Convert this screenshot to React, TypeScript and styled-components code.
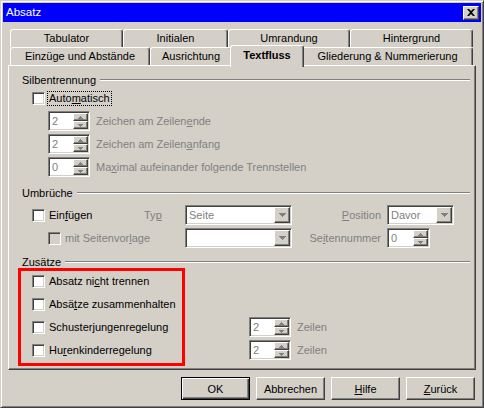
import React from 'react';
import styled, { createGlobalStyle, css } from 'styled-components';

const FACE = '#d4d0c8';
const SHADOW = '#808080';
const DARK = '#404040';
const LIGHT = '#ffffff';
const GRAY_TEXT = '#808080';

const GlobalStyle = createGlobalStyle`
	html, body {
		margin: 0;
		padding: 0;
		background: ${FACE};
	}
	body {
		font-family: "Liberation Sans", Arial, sans-serif;
		font-size: 11px;
		color: #000;
	}
	* {
		box-sizing: border-box;
	}
`;

const raised = css`
	background: ${FACE};
	border: 1px solid;
	border-color: ${LIGHT} ${DARK} ${DARK} ${LIGHT};
	box-shadow: inset -1px -1px ${SHADOW};
`;

const sunken = css`
	border: 1px solid;
	border-color: ${SHADOW} ${LIGHT} ${LIGHT} ${SHADOW};
	box-shadow: inset 1px 1px ${DARK}, inset -1px -1px ${FACE};
`;

const UpArrow = ({ color = GRAY_TEXT }: { color?: string }) => (
	<svg width='5' height='3' viewBox='0 0 5 3'>
		<path d='M2 0H3V1H4V2H5V3H0V2H1V1H2Z' fill={color} />
	</svg>
);

const DownArrow = ({ color = GRAY_TEXT, big = false }: { color?: string; big?: boolean }) =>
	big ? (
		<svg width='7' height='4' viewBox='0 0 7 4'>
			<path d='M0 0H7V1H6V2H5V3H4V4H3V3H2V2H1V1H0Z' fill={color} />
		</svg>
	) : (
		<svg width='5' height='3' viewBox='0 0 5 3'>
			<path d='M0 0H5V1H4V2H3V3H2V2H1V1H0Z' fill={color} />
		</svg>
	);

const CloseGlyph = () => (
	<svg width='8' height='7' viewBox='0 0 8 7'>
		<path d='M0 0H2L4 2L6 0H8L5 3.5L8 7H6L4 5L2 7H0L3 3.5Z' fill='#000' />
	</svg>
);

function Spin({ value, width = 42 }: { value: string; width?: number }) {
	return (
		<FieldBox $w={width}>
			<FieldText>{value}</FieldText>
			<SpinButtons>
				<SpinButton>
					<UpArrow />
				</SpinButton>
				<SpinButton>
					<DownArrow />
				</SpinButton>
			</SpinButtons>
		</FieldBox>
	);
}

function Select({ value, width }: { value: string; width: number }) {
	return (
		<FieldBox $w={width}>
			<FieldText>{value}</FieldText>
			<DropButton>
				<DownArrow big />
			</DropButton>
		</FieldBox>
	);
}

function Check({
	children,
	disabled = false,
	focused = false,
}: {
	children: React.ReactNode;
	disabled?: boolean;
	focused?: boolean;
}) {
	return (
		<CheckField>
			<CheckBox $disabled={disabled} />
			<CheckLabel $disabled={disabled} $focused={focused}>
				{children}
			</CheckLabel>
		</CheckField>
	);
}

const tabsTop = [
	{ label: 'Tabulator', w: 113 },
	{ label: 'Initialen', w: 105 },
	{ label: 'Umrandung', w: 122 },
	{ label: 'Hintergrund', w: 123 },
];

const tabsBottom = [
	{ label: 'Einzüge und Abstände', w: 140 },
	{ label: 'Ausrichtung', w: 82 },
	{ label: 'Textfluss', w: 70, active: true },
	{ label: 'Gliederung & Nummerierung', w: 171 },
];

export default function App() {
	return (
		<>
			<GlobalStyle />
			<Window>
				<TitleBar>
					<Title>Absatz</Title>
					<CloseButton>
						<CloseGlyph />
					</CloseButton>
				</TitleBar>
				<Body>
					<TabStrip>
						<TabRow>
							{tabsTop.map((t) => (
								<Tab key={t.label} $w={t.w}>
									{t.label}
								</Tab>
							))}
						</TabRow>
						<TabRow>
							{tabsBottom.map((t) => (
								<Tab key={t.label} $w={t.w} $active={t.active}>
									{t.label}
								</Tab>
							))}
						</TabRow>
					</TabStrip>

					<Panel>
						<GroupHeader $top={0}>
							Silbentrennung
							<HeaderLine />
						</GroupHeader>
						<Row $mt={1} $indent={10}>
							<Check focused>
								Auto<Mnemonic>m</Mnemonic>atisch
							</Check>
						</Row>
						<Row $indent={26}>
							<Spin value='2' />
							<FieldLabel $disabled $ml={6}>
								Zeichen am Zeilen<Mnemonic>e</Mnemonic>nde
							</FieldLabel>
						</Row>
						<Row $indent={26}>
							<Spin value='2' />
							<FieldLabel $disabled $ml={6}>
								Zeichen am Zeilen<Mnemonic>a</Mnemonic>nfang
							</FieldLabel>
						</Row>
						<Row $indent={26}>
							<Spin value='0' />
							<FieldLabel $disabled $ml={6}>
								Ma<Mnemonic>x</Mnemonic>imal aufeinander folgende Trennstellen
							</FieldLabel>
						</Row>

						<GroupHeader $top={9}>
							Umbrüche
							<HeaderLine />
						</GroupHeader>
						<BreakGrid>
							<GridCell>
								<Check>
									Ein<Mnemonic>f</Mnemonic>ügen
								</Check>
							</GridCell>
							<FieldLabel $disabled>
								Ty<Mnemonic>p</Mnemonic>
							</FieldLabel>
							<Select value='Seite' width={107} />
							<FieldLabel $disabled $right>
								<Mnemonic>P</Mnemonic>osition
							</FieldLabel>
							<Select value='Davor' width={67} />

							<GridCell $span={2} $pad={16}>
								<Check disabled>
									mit Seitenvor<Mnemonic>l</Mnemonic>age
								</Check>
							</GridCell>
							<Select value='' width={107} />
							<FieldLabel $disabled $right>
								Se<Mnemonic>i</Mnemonic>tennummer
							</FieldLabel>
							<Spin value='0' width={43} />
						</BreakGrid>

						<GroupHeader $top={7}>
							Zusätze
							<HeaderLine />
						</GroupHeader>
						<Row $mt={2} $indent={10}>
							<CheckColumn>
								<Check>
									Absatz ni<Mnemonic>c</Mnemonic>ht trennen
								</Check>
							</CheckColumn>
						</Row>
						<Row $indent={10}>
							<CheckColumn>
								<Check>
									Absä<Mnemonic>t</Mnemonic>ze zusammenhalten
								</Check>
							</CheckColumn>
						</Row>
						<Row $indent={10}>
							<CheckColumn>
								<Check>
									Schuster<Mnemonic>j</Mnemonic>ungenregelung
								</Check>
							</CheckColumn>
							<Spin value='2' />
							<FieldLabel $disabled $ml={6}>
								Zeilen
							</FieldLabel>
						</Row>
						<Row $indent={10}>
							<CheckColumn>
								<Check>
									Hu<Mnemonic>r</Mnemonic>enkinderregelung
								</Check>
							</CheckColumn>
							<Spin value='2' />
							<FieldLabel $disabled $ml={6}>
								Zeilen
							</FieldLabel>
						</Row>

						<Highlight />
					</Panel>

					<ButtonBar>
						<PushButton $default>OK</PushButton>
						<PushButton>Abbrechen</PushButton>
						<PushButton>
							<Mnemonic>H</Mnemonic>ilfe
						</PushButton>
						<PushButton>
							<Mnemonic>Z</Mnemonic>urück
						</PushButton>
					</ButtonBar>
				</Body>
			</Window>
		</>
	);
}

const Window = styled.div`
	width: 484px;
	height: 408px;
	background: ${FACE};
	border: 1px solid;
	border-color: ${FACE} ${DARK} ${DARK} ${FACE};
	box-shadow: inset 1px 1px ${LIGHT}, inset -1px -1px ${SHADOW};
	padding: 2px;
	display: flex;
	flex-direction: column;
`;

const TitleBar = styled.div`
	height: 19px;
	flex: none;
	background: #0000ff;
	color: #fff;
	display: flex;
	align-items: center;
	justify-content: space-between;
	padding: 0 2px 0 3px;
`;

const Title = styled.span`
	font-size: 11.5px;
	line-height: 19px;
`;

const CloseButton = styled.div`
	${raised};
	width: 16px;
	height: 14px;
	display: flex;
	align-items: center;
	justify-content: center;
	padding: 0 1px 1px 0;
`;

const Body = styled.div`
	display: flex;
	flex-direction: column;
	padding: 7px 5px 0;
`;

const TabStrip = styled.div`
	display: flex;
	flex-direction: column;
	padding-left: 2px;
`;

const TabRow = styled.div`
	display: flex;
	height: 18px;
`;

const Tab = styled.div<{ $w: number; $active?: boolean }>`
	width: ${(p) => p.$w}px;
	height: 18px;
	flex: none;
	background: ${FACE};
	border: 1px solid;
	border-bottom: none;
	border-color: ${LIGHT} ${DARK} transparent ${LIGHT};
	box-shadow: inset -1px 0 ${SHADOW};
	border-radius: 3px 3px 0 0;
	text-align: center;
	line-height: 17px;
	white-space: nowrap;
	${(p) =>
		p.$active &&
		css`
			position: relative;
			z-index: 1;
			width: ${p.$w + 4}px;
			height: 22px;
			margin: -2px -2px -2px;
			font-weight: bold;
			line-height: 19px;
		`}
`;

const Panel = styled.div`
	position: relative;
	height: 305px;
	border: 1px solid;
	border-color: ${LIGHT} ${DARK} ${DARK} ${LIGHT};
	box-shadow: inset -1px -1px ${SHADOW};
	padding: 7px 5px 0 13px;
	display: flex;
	flex-direction: column;
`;

const GroupHeader = styled.div<{ $top: number }>`
	display: flex;
	align-items: center;
	height: 14px;
	margin-top: ${(p) => p.$top}px;
	white-space: nowrap;
`;

const HeaderLine = styled.div`
	flex: 1;
	height: 2px;
	margin-left: 4px;
	border-top: 1px solid ${SHADOW};
	border-bottom: 1px solid ${LIGHT};
`;

const Row = styled.div<{ $mt?: number; $indent?: number }>`
	display: flex;
	align-items: center;
	height: 20px;
	margin-top: ${(p) => p.$mt ?? 3}px;
	padding-left: ${(p) => p.$indent ?? 0}px;
`;

const CheckColumn = styled.div`
	width: 217px;
	flex: none;
`;

const BreakGrid = styled.div`
	display: grid;
	grid-template-columns: 112px 41px 107px 95px 67px;
	grid-auto-rows: 20px;
	row-gap: 3px;
	align-items: center;
	margin: 5px 0 0 10px;
`;

const GridCell = styled.div<{ $span?: number; $pad?: number }>`
	grid-column: span ${(p) => p.$span ?? 1};
	padding-left: ${(p) => p.$pad ?? 0}px;
`;

const CheckField = styled.div`
	display: flex;
	align-items: center;
	white-space: nowrap;
`;

const CheckBox = styled.div<{ $disabled?: boolean }>`
	${sunken};
	width: 13px;
	height: 13px;
	flex: none;
	background: ${(p) => (p.$disabled ? FACE : '#fff')};
`;

const CheckLabel = styled.span<{ $disabled?: boolean; $focused?: boolean }>`
	margin-left: 2px;
	padding: 0 1px;
	line-height: 13px;
	border: 1px ${(p) => (p.$focused ? 'dotted #000' : 'solid transparent')};
	color: ${(p) => (p.$disabled ? GRAY_TEXT : '#000')};
`;

const FieldLabel = styled.span<{ $disabled?: boolean; $ml?: number; $right?: boolean }>`
	color: ${(p) => (p.$disabled ? GRAY_TEXT : '#000')};
	margin-left: ${(p) => p.$ml ?? 0}px;
	white-space: nowrap;
	${(p) =>
		p.$right &&
		css`
			text-align: right;
			padding-right: 6px;
		`}
`;

const Mnemonic = styled.span`
	text-decoration: underline;
	text-underline-offset: 1px;
`;

const FieldBox = styled.div<{ $w: number }>`
	${sunken};
	width: ${(p) => p.$w}px;
	height: 20px;
	flex: none;
	display: flex;
	padding: 1px;
	background: #fff;
`;

const FieldText = styled.div`
	flex: 1;
	padding-left: 2px;
	line-height: 16px;
	color: ${GRAY_TEXT};
	background: #fff;
	overflow: hidden;
	white-space: nowrap;
`;

const SpinButtons = styled.div`
	width: 15px;
	display: flex;
	flex-direction: column;
`;

const SpinButton = styled.div`
	${raised};
	flex: 1;
	display: flex;
	align-items: center;
	justify-content: center;
`;

const DropButton = styled.div`
	${raised};
	width: 16px;
	display: flex;
	align-items: center;
	justify-content: center;
`;

const Highlight = styled.div`
	position: absolute;
	left: 9px;
	top: 202px;
	width: 167px;
	height: 98px;
	border: 3px solid #ff0000;
	pointer-events: none;
`;

const ButtonBar = styled.div`
	display: flex;
	justify-content: flex-end;
	gap: 6px;
	margin-top: 7px;
	padding-right: 1px;
`;

const PushButton = styled.div<{ $default?: boolean }>`
	${raised};
	width: 69px;
	height: 23px;
	display: flex;
	align-items: center;
	justify-content: center;
	${(p) =>
		p.$default &&
		css`
			border-color: #000;
			box-shadow: inset 1px 1px ${LIGHT}, inset -1px -1px ${DARK}, inset -2px -2px ${SHADOW};
		`}
`;
